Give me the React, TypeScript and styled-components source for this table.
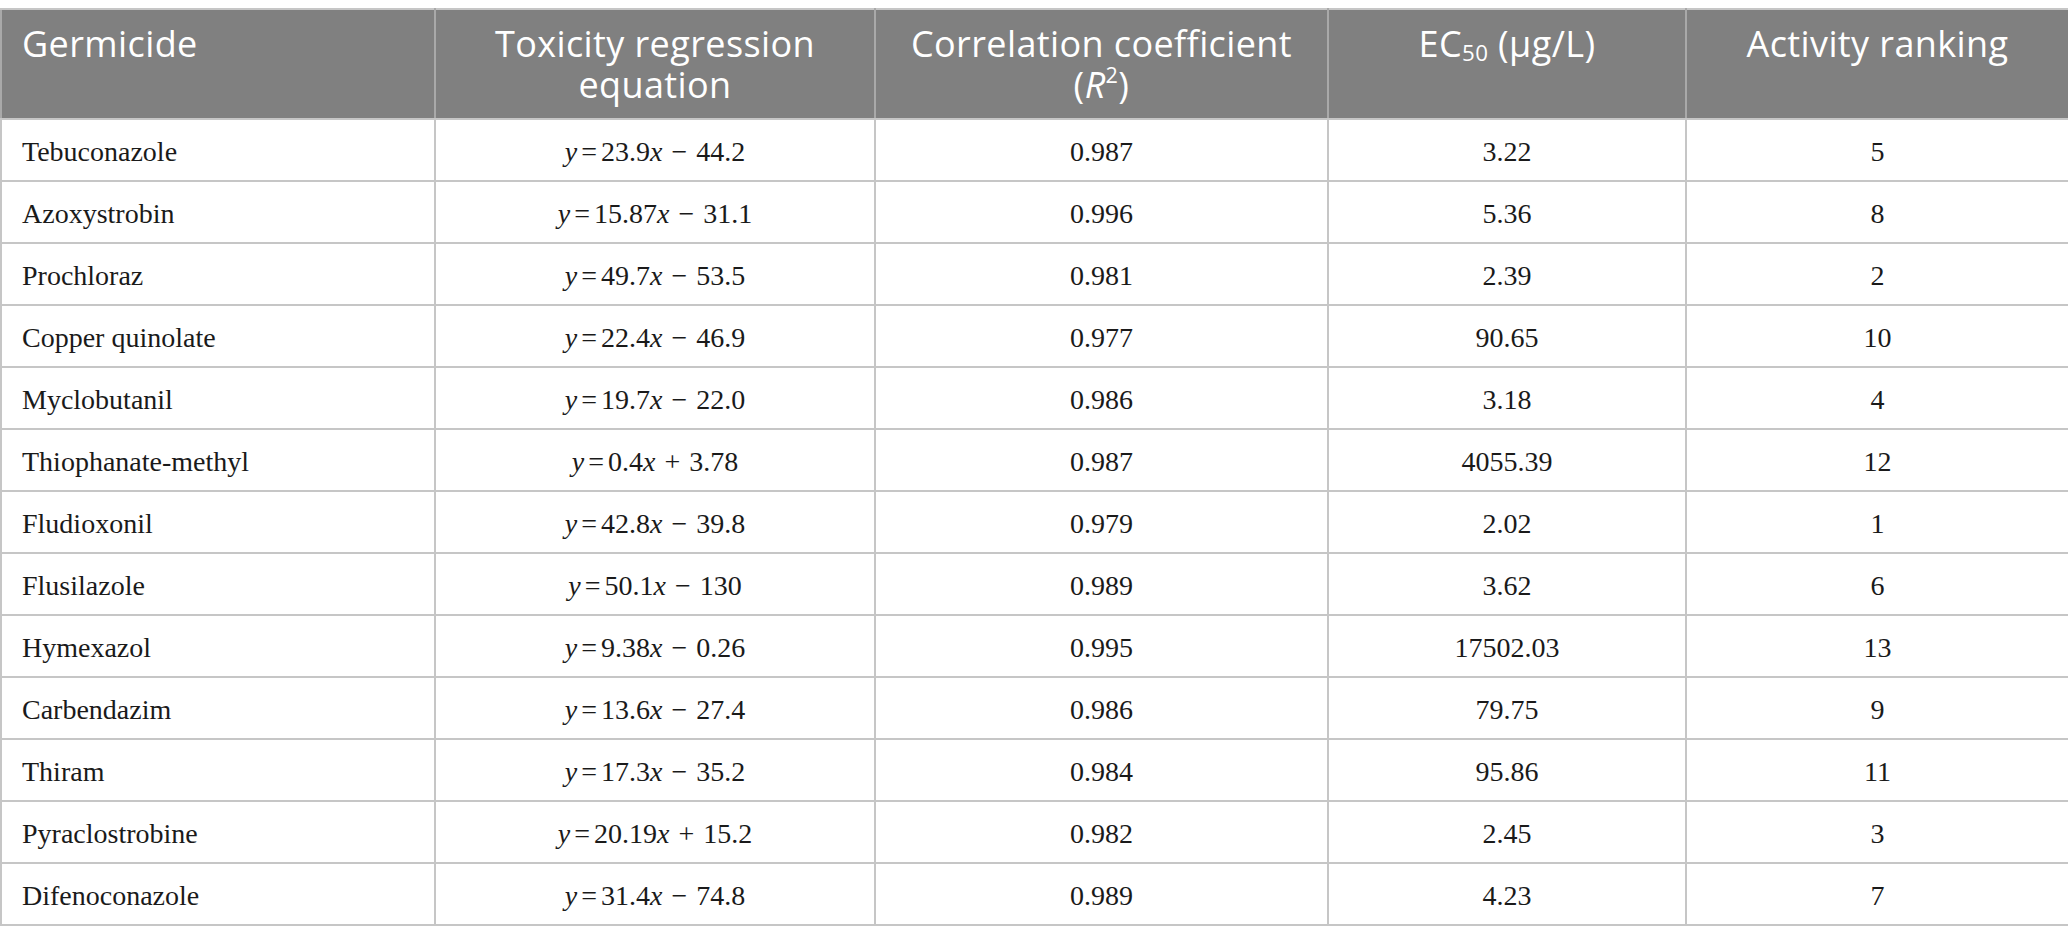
import React from "react";
import styled, { createGlobalStyle } from "styled-components";

const GlobalStyle = createGlobalStyle`
  html, body {
    margin: 0;
    padding: 0;
    background: #ffffff;
  }
`;

type Row = {
  name: string;
  slope: string;
  sign: "−" | "+";
  intercept: string;
  r2: string;
  ec50: string;
  rank: string;
};

const rows: Row[] = [
  { name: "Tebuconazole", slope: "23.9", sign: "−", intercept: "44.2", r2: "0.987", ec50: "3.22", rank: "5" },
  { name: "Azoxystrobin", slope: "15.87", sign: "−", intercept: "31.1", r2: "0.996", ec50: "5.36", rank: "8" },
  { name: "Prochloraz", slope: "49.7", sign: "−", intercept: "53.5", r2: "0.981", ec50: "2.39", rank: "2" },
  { name: "Copper quinolate", slope: "22.4", sign: "−", intercept: "46.9", r2: "0.977", ec50: "90.65", rank: "10" },
  { name: "Myclobutanil", slope: "19.7", sign: "−", intercept: "22.0", r2: "0.986", ec50: "3.18", rank: "4" },
  { name: "Thiophanate-methyl", slope: "0.4", sign: "+", intercept: "3.78", r2: "0.987", ec50: "4055.39", rank: "12" },
  { name: "Fludioxonil", slope: "42.8", sign: "−", intercept: "39.8", r2: "0.979", ec50: "2.02", rank: "1" },
  { name: "Flusilazole", slope: "50.1", sign: "−", intercept: "130", r2: "0.989", ec50: "3.62", rank: "6" },
  { name: "Hymexazol", slope: "9.38", sign: "−", intercept: "0.26", r2: "0.995", ec50: "17502.03", rank: "13" },
  { name: "Carbendazim", slope: "13.6", sign: "−", intercept: "27.4", r2: "0.986", ec50: "79.75", rank: "9" },
  { name: "Thiram", slope: "17.3", sign: "−", intercept: "35.2", r2: "0.984", ec50: "95.86", rank: "11" },
  { name: "Pyraclostrobine", slope: "20.19", sign: "+", intercept: "15.2", r2: "0.982", ec50: "2.45", rank: "3" },
  { name: "Difenoconazole", slope: "31.4", sign: "−", intercept: "74.8", r2: "0.989", ec50: "4.23", rank: "7" },
];

const columns = [434, 440, 453, 358, 383];

function App() {
  return (
    <Page>
      <GlobalStyle />
      <Table>
        <colgroup>
          {columns.map((w, i) => (
            <col key={i} style={{ width: w }} />
          ))}
        </colgroup>
        <thead>
          <tr>
            <HeadCell align="left">
              <HeadLine>Germicide</HeadLine>
            </HeadCell>
            <HeadCell>
              <HeadLine>Toxicity regression</HeadLine>
              <HeadLine>equation</HeadLine>
            </HeadCell>
            <HeadCell>
              <HeadLine>Correlation coefficient</HeadLine>
              <HeadLine>
                (<Em>R</Em>
                <Sup>2</Sup>)
              </HeadLine>
            </HeadCell>
            <HeadCell>
              <HeadLine>
                EC<Sub>50</Sub> (μg/L)
              </HeadLine>
            </HeadCell>
            <HeadCell>
              <HeadLine>Activity ranking</HeadLine>
            </HeadCell>
          </tr>
        </thead>
        <tbody>
          {rows.map((r) => (
            <tr key={r.name}>
              <BodyCell align="left">{r.name}</BodyCell>
              <BodyCell>
                <Em>y</Em>
                <Eq>=</Eq>
                {r.slope}
                <Em>x</Em>
                <Op>{r.sign}</Op>
                {r.intercept}
              </BodyCell>
              <BodyCell>{r.r2}</BodyCell>
              <BodyCell>{r.ec50}</BodyCell>
              <BodyCell>{r.rank}</BodyCell>
            </tr>
          ))}
        </tbody>
      </Table>
    </Page>
  );
}

interface CellProps {
  align?: "left" | "center";
}

const Page = styled.div`
  padding-top: 8px;
  width: 2068px;
`;

const Table = styled.table`
  width: 2068px;
  table-layout: fixed;
  border-collapse: collapse;
  border: 2px solid #c6c6c6;
`;

const HeadCell = styled.th<CellProps>`
  height: 110px;
  box-sizing: border-box;
  background-color: #808080;
  color: #ffffff;
  font-family: "Open Sans", "Noto Sans", sans-serif;
  font-weight: 400;
  font-size: 36px;
  letter-spacing: 0.4px;
  text-align: ${(p) => p.align || "center"};
  vertical-align: top;
  padding: 9px 20px 0;
  border: 2px solid #a9a9a9;
  border-top-color: #c6c6c6;
  border-bottom-color: #c6c6c6;
`;

const HeadLine = styled.div`
  height: 41px;
  line-height: 50px;
  white-space: nowrap;
`;

const BodyCell = styled.td<CellProps>`
  height: 62px;
  box-sizing: border-box;
  padding: 4px 20px 0;
  font-family: "Liberation Serif", "Times New Roman", serif;
  font-size: 28px;
  line-height: 32px;
  color: #1a1a1a;
  text-align: ${(p) => p.align || "center"};
  vertical-align: middle;
  border: 2px solid #c6c6c6;
  white-space: nowrap;
`;

const Em = styled.i`
  font-style: italic;
`;

const Eq = styled.span`
  padding: 0 4px;
`;

const Op = styled.span`
  padding: 0 9px;
`;

const Sup = styled.sup`
  font-size: 60%;
  vertical-align: 0.7em;
  line-height: 0;
`;

const Sub = styled.sub`
  font-size: 62%;
  vertical-align: -0.2em;
  line-height: 0;
`;

export default App;
